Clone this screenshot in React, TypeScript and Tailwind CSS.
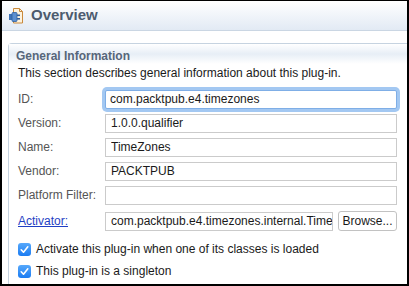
import React from "react";

function PluginIcon() {
  return (
    <svg width="16" height="18" viewBox="0 0 16 18" className="shrink-0">
      <path d="M5.5 1.5h6l3 3v11.5h-9z" fill="#fdf3df" stroke="#c98a3c" strokeWidth="1" />
      <path d="M11.5 1.5v3h3" fill="none" stroke="#c98a3c" strokeWidth="1" />
      <rect x="1" y="7" width="3" height="6" fill="#3d73b8" />
      <rect x="4" y="5.5" width="5" height="9" rx="1" fill="#5b8fd0" stroke="#2f5f9e" strokeWidth="0.8" />
      <rect x="9" y="7.5" width="3" height="1.6" fill="#2f5f9e" />
      <rect x="9" y="11" width="3" height="1.6" fill="#2f5f9e" />
    </svg>
  );
}

function CheckBox() {
  return (
    <svg width="13" height="13" viewBox="0 0 13 13" className="shrink-0">
      <defs>
        <linearGradient id="cbg" x1="0" y1="0" x2="0" y2="1">
          <stop offset="0" stopColor="#56a8fb" />
          <stop offset="1" stopColor="#1b7cf2" />
        </linearGradient>
      </defs>
      <rect x="0" y="0" width="13" height="13" rx="3" fill="url(#cbg)" />
      <path d="M3.2 6.8l2.3 2.4 4.3-5.4" fill="none" stroke="#fff" strokeWidth="1.6" strokeLinecap="round" strokeLinejoin="round" />
    </svg>
  );
}

function Row({ label, value, focused }: { label: string; value: string; focused?: boolean }) {
  return (
    <div className="flex h-[24px] items-center">
      <div className="w-[87px] shrink-0 text-[12px] text-[#555555]">{label}</div>
      <input
        readOnly
        value={value}
        className={
          focused
            ? "h-[19px] w-[292px] rounded-[2px] border border-[#7faee6] bg-white pl-[4px] text-[12px] text-[#1a1a1a] outline-none ring-[3px] ring-[#a3c8f2]"
            : "h-[19px] w-[292px] border border-[#cbcbcb] bg-white pl-[5px] text-[12px] text-[#1a1a1a] outline-none"
        }
      />
    </div>
  );
}

export default function App() {
  return (
    <div
      className="flex h-[286px] w-[409px] flex-col overflow-hidden border-2 border-t border-black bg-white"
      style={{ fontFamily: '"Liberation Sans", Arial, sans-serif' }}
    >
      <div className="flex h-[30px] shrink-0 items-center gap-[7px] border-b border-[#cad6e3] bg-gradient-to-b from-white to-[#e2eaf4] pl-[6px]">
        <PluginIcon />
        <span className="text-[15px] font-bold text-[#4c5b6f]">Overview</span>
      </div>
      <div className="ml-[6px] mt-[12px] flex flex-1 flex-col rounded-tl-[4px] border-l border-t border-[#c6d3e0]">
        <div className="bg-gradient-to-b from-white via-[#e7eef6] to-white pl-[7px] pt-[5px] text-[12px] font-bold leading-[15px] text-[#56667a]">
          General Information
        </div>
        <div className="flex flex-col pl-[9px] pr-[10px]">
          <div className="mt-[1px] text-[12px] leading-[16px] text-[#1a1a1a]">
            This section describes general information about this plug-in.
          </div>
          <div className="mt-[6px] flex flex-col">
            <Row label="ID:" value="com.packtpub.e4.timezones" focused />
            <Row label="Version:" value="1.0.0.qualifier" />
            <Row label="Name:" value="TimeZones" />
            <Row label="Vendor:" value="PACKTPUB" />
            <Row label="Platform Filter:" value="" />
            <div className="flex h-[28px] items-center">
              <div className="w-[87px] shrink-0 text-[12px] text-[#1f3fc4] underline">Activator:</div>
              <input
                readOnly
                value="com.packtpub.e4.timezones.internal.TimeZonesActivator"
                className="h-[19px] w-[228px] border border-[#cbcbcb] bg-white pl-[5px] text-[12px] text-[#1a1a1a] outline-none"
              />
              <button className="ml-[5px] flex h-[20px] w-[59px] items-center justify-center rounded-[3px] border border-[#c2c2c2] bg-white text-[12px] text-[#1a1a1a]">
                Browse...
              </button>
            </div>
            <div className="mt-[3px] flex h-[22px] items-center gap-[5px]">
              <CheckBox />
              <span className="text-[12px] text-[#1a1a1a]">Activate this plug-in when one of its classes is loaded</span>
            </div>
            <div className="flex h-[22px] items-center gap-[5px]">
              <CheckBox />
              <span className="text-[12px] text-[#1a1a1a]">This plug-in is a singleton</span>
            </div>
          </div>
        </div>
      </div>
    </div>
  );
}
